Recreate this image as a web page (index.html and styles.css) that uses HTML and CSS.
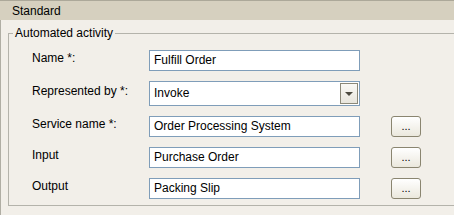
FILE: index.html
```html
<!DOCTYPE html>
<html lang="en">
<head>
    <meta charset="UTF-8">
    <title>Automated activity</title>
    <link rel="stylesheet" href="styles.css">
</head>
<body>
    <div class="tab-header">Standard</div>
    <div class="panel">
        <fieldset class="group">
            <legend>Automated activity</legend>
            <div class="rows">
                <label class="label">Name *:</label>
                <div class="field">Fulfill Order</div>
                <div></div>

                <label class="label label-select">Represented by *:</label>
                <div class="field select">
                    <span>Invoke</span>
                    <span class="drop"><span class="arrow"></span></span>
                </div>
                <div></div>

                <label class="label">Service name *:</label>
                <div class="field">Order Processing System</div>
                <button class="dots">...</button>

                <label class="label">Input</label>
                <div class="field">Purchase Order</div>
                <button class="dots">...</button>

                <label class="label">Output</label>
                <div class="field">Packing Slip</div>
                <button class="dots">...</button>
            </div>
        </fieldset>
    </div>
</body>
</html>
```

FILE: styles.css
```css
body {
    margin: 0;
    font-family: 'Liberation Sans', Arial, sans-serif;
    font-size: 12px;
    color: #000;
    background-color: #f2efe9;
    width: 454px;
    height: 215px;
    overflow: hidden;
}

.tab-header {
    height: 19px;
    line-height: 20px;
    border-top: 1px solid #aca899;
    background-color: #d6d0bf;
    padding-left: 12px;
}

.panel {
    border-left: 1px solid #b0aea4;
    height: 195px;
    padding-top: 6px;
    box-sizing: border-box;
    overflow: hidden;
}

.group {
    margin: 0 -4px 0 7px;
    padding: 0;
    border: 1px solid #b4b3ab;
    border-right: none;
    min-width: 0;
}

.group legend {
    margin-left: 4px;
    padding: 0 2px;
    line-height: 14px;
}

.rows {
    display: grid;
    grid-template-columns: 117px 211px 61px;
    row-gap: 10px;
    padding: 10px 0 6px 23px;
}

.label {
    padding-top: 1px;
    line-height: 14px;
}

.label-select {
    padding-top: 3px;
}

.field {
    height: 21px;
    border: 1px solid #7f9db9;
    background-color: #fff;
    box-sizing: border-box;
    padding-left: 4px;
    line-height: 19px;
    white-space: nowrap;
}

.select {
    height: 25px;
    line-height: 23px;
    display: flex;
    justify-content: space-between;
    padding-right: 1px;
}

.drop {
    width: 18px;
    height: 21px;
    margin-top: 1px;
    border: 1px solid #8b8878;
    box-sizing: border-box;
    background: linear-gradient(#faf9f5, #e8e5dc);
    display: flex;
    align-items: center;
    justify-content: center;
}

.arrow {
    width: 0;
    height: 0;
    border-left: 4px solid transparent;
    border-right: 4px solid transparent;
    border-top: 4px solid #4d4a3f;
}

.dots {
    justify-self: end;
    width: 30px;
    height: 21px;
    padding: 0;
    border: 1px solid #8a8570;
    border-radius: 3px;
    background: linear-gradient(#ffffff, #ebe8dd);
    font-family: 'Liberation Sans', Arial, sans-serif;
    font-size: 11px;
    line-height: 17px;
    color: #000;
}
```
